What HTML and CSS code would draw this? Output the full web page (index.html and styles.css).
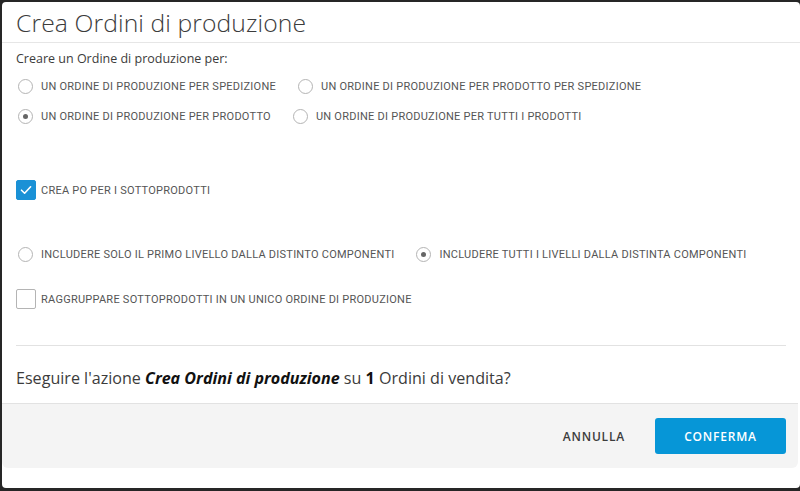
FILE: index.html
```html
<!DOCTYPE html>
<html lang="it">
<head>
<meta charset="utf-8">
<title>Crea Ordini di produzione</title>
<link rel="stylesheet" href="styles.css">
</head>
<body>
<div class="dialog">
  <header class="dlg-head">
    <h1 class="dlg-title">Crea Ordini di produzione</h1>
  </header>
  <section class="dlg-body">
    <p class="intro">Creare un Ordine di produzione per:</p>
    <div class="opt-row top-row">
      <label class="radio"><span class="dot"></span><span class="lbl">UN ORDINE DI PRODUZIONE PER SPEDIZIONE</span></label>
      <label class="radio"><span class="dot"></span><span class="lbl">UN ORDINE DI PRODUZIONE PER PRODOTTO PER SPEDIZIONE</span></label>
    </div>
    <div class="opt-row">
      <label class="radio"><span class="dot on"></span><span class="lbl">UN ORDINE DI PRODUZIONE PER PRODOTTO</span></label>
      <label class="radio"><span class="dot"></span><span class="lbl">UN ORDINE DI PRODUZIONE PER TUTTI I PRODOTTI</span></label>
    </div>
    <div class="check-row first-check">
      <span class="box checked"><svg viewBox="0 0 20 20" width="20" height="20"><path d="M5.5 10.2 L8.6 13.2 L14.6 6.8" fill="none" stroke="#fff" stroke-width="1.6" stroke-linecap="round" stroke-linejoin="round"/></svg></span>
      <span class="lbl">CREA PO PER I SOTTOPRODOTTI</span>
    </div>
    <div class="opt-row level-row">
      <label class="radio"><span class="dot"></span><span class="lbl">INCLUDERE SOLO IL PRIMO LIVELLO DALLA DISTINTO COMPONENTI</span></label>
      <label class="radio"><span class="dot on"></span><span class="lbl">INCLUDERE TUTTI I LIVELLI DALLA DISTINTA COMPONENTI</span></label>
    </div>
    <div class="check-row group-check">
      <span class="box"></span>
      <span class="lbl">RAGGRUPPARE SOTTOPRODOTTI IN UN UNICO ORDINE DI PRODUZIONE</span>
    </div>
    <hr class="sep">
    <p class="question">Eseguire l'azione <b><i>Crea Ordini di produzione</i></b> su <b>1</b> Ordini di vendita?</p>
  </section>
  <footer class="dlg-foot">
    <button class="btn-text">ANNULLA</button>
    <button class="btn-primary">CONFERMA</button>
  </footer>
</div>
</body>
</html>
```
FILE: styles.css
```css
html, body {
  margin: 0;
  padding: 0;
  height: 100%;
  background: #262626;
  overflow: hidden;
}
.dialog {
  margin: 2px 0 0 2px;
  width: 798px;
  height: 486px;
  background: #fff;
  border-radius: 4px;
  display: flex;
  flex-direction: column;
  font-family: "Open Sans", sans-serif;
  color: #3c3c3c;
  box-sizing: border-box;
  padding-bottom: 20px;
}
.dlg-head {
  height: 40px;
  border-bottom: 1px solid #e6e6e6;
  padding: 0 14px;
  display: flex;
  align-items: center;
}
.dlg-title {
  margin: 0;
  font-size: 24.7px;
  font-weight: 300;
  color: #3c3c3c;
  letter-spacing: 0.1px;
}
.dlg-body {
  flex: 1;
  padding: 0 12px 0 14px;
}
.intro {
  margin: 8px 0 0 0;
  font-size: 12.5px;
  line-height: 16px;
  color: #3c3c3c;
}
.opt-row {
  display: flex;
  align-items: center;
  gap: 20px;
  height: 30px;
}
.top-row { margin-top: 4px; }
.radio {
  display: flex;
  align-items: center;
  gap: 8px;
  padding-left: 2px;
}
.lbl {
  font-family: "Roboto", sans-serif;
  font-size: 11px;
  letter-spacing: 0.25px;
  color: #555;
  white-space: nowrap;
}
.dot {
  width: 13px;
  height: 13px;
  border: 1px solid #b4b4b4;
  border-radius: 50%;
  box-sizing: content-box;
  display: flex;
  align-items: center;
  justify-content: center;
  background: #fff;
}
.dot.on::after {
  content: "";
  width: 5px;
  height: 5px;
  border-radius: 50%;
  background: #666;
}
.check-row {
  display: flex;
  align-items: center;
  gap: 5px;
  height: 20px;
}
.first-check { margin-top: 49px; }
.level-row { margin-top: 39px; }
.group-check { margin-top: 20px; }
.box {
  width: 20px;
  height: 20px;
  box-sizing: border-box;
  border: 1px solid #b4b4b4;
  border-radius: 2px;
  background: #fff;
  display: flex;
}
.box.checked {
  background: #1a91d6;
  border-color: #1a91d6;
}
.box.checked svg { margin: -1px; }
.sep {
  margin: 36px 0 0 0;
  border: none;
  border-top: 1px solid #e2e2e2;
  width: 770px;
}
.question {
  margin: 22px 0 0 0;
  font-size: 16.1px;
  line-height: 20px;
  color: #3c3c3c;
}
.question b { color: #111; font-weight: 700; }
.dlg-foot {
  height: 64px;
  background: #f4f4f4;
  border-top: 1px solid #e2e2e2;
  border-radius: 0 0 6px 6px;
  display: flex;
  align-items: center;
  justify-content: flex-end;
  padding: 0 12px 0 0;
  gap: 30px;
  margin-right: 2px;
}
.btn-text, .btn-primary {
  font-family: "Open Sans", sans-serif;
  font-size: 12px;
  font-weight: 600;
  letter-spacing: 0.8px;
  border: none;
  cursor: pointer;
}
.btn-text {
  background: transparent;
  color: #3c3c3c;
  padding: 0;
}
.btn-primary {
  width: 131px;
  height: 36px;
  background: #0696d7;
  color: #fff;
  border-radius: 3px;
}
```
